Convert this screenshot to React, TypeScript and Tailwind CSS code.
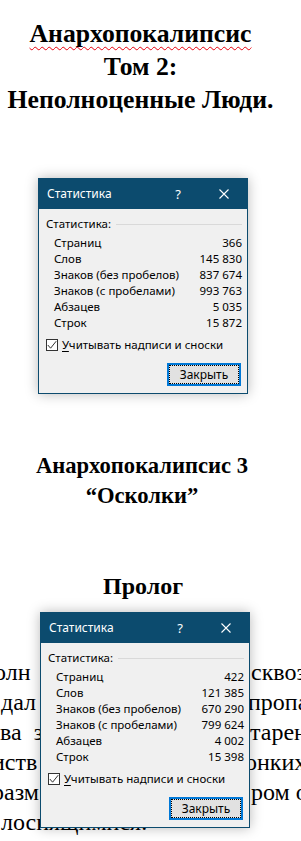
const serif = { fontFamily: '"Liberation Serif", "Times New Roman", serif' };
const ui = { fontFamily: '"Noto Sans", "Open Sans", sans-serif' };

type Row = [string, string];

const StatsDialog = ({ rows }: { rows: Row[] }) => (
  <div
    className="flex h-[216px] w-[210px] flex-col border border-[#0c4b6e] bg-[#f0f0f0] text-[11.5px] leading-[16px] text-black shadow-[0_0_12px_rgba(0,0,0,0.28)]"
    style={ui}
  >
    <div className="flex h-[30px] shrink-0 items-center bg-[#0c4b6e] text-[12px] text-white">
      <span className="flex-1 pl-[8px]">Статистика</span>
      <span className="w-[46px] text-center text-[13px]">?</span>
      <span className="flex w-[46px] justify-center">
        <svg width="10" height="10" viewBox="0 0 10 10">
          <path d="M0.5 0.5 L9.5 9.5 M9.5 0.5 L0.5 9.5" stroke="#fff" strokeWidth="1.1" />
        </svg>
      </span>
    </div>

    <div className="pl-[7px] pr-[5px] pt-[7px]">
      <div className="flex items-center gap-[5px]">
        <span>Статистика:</span>
        <span className="h-px flex-1 bg-[#d9d9d9]" />
      </div>

      <div className="mt-[3px] pl-[8px]">
        {rows.map(([label, value]) => (
          <div key={label} className="flex h-[16px] items-center justify-between">
            <span>{label}</span>
            <span>{value}</span>
          </div>
        ))}
      </div>

      <div className="mt-[6px] flex h-[16px] items-center gap-[4px]">
        <span className="flex h-[12px] w-[12px] items-center justify-center border border-[#333] bg-white">
          <svg width="10" height="10" viewBox="0 0 10 10">
            <path d="M0.8 5 L3.6 8.2 L9.2 1.2" fill="none" stroke="#333" strokeWidth="1" />
          </svg>
        </span>
        <span>
          <span className="underline underline-offset-[2px]">У</span>читывать надписи и сноски
        </span>
      </div>
    </div>

    <div className="mt-[10px] flex justify-end pr-[6px]">
      <button className="flex h-[23px] w-[74px] items-center justify-center border-2 border-[#0078d7] bg-[#e1e1e1] text-[12px] outline-1 outline-dotted outline-black outline-offset-[-3px]">
        Закрыть
      </button>
    </div>
  </div>
);

const firstStats: Row[] = [
  ['Страниц', '366'],
  ['Слов', '145 830'],
  ['Знаков (без пробелов)', '837 674'],
  ['Знаков (с пробелами)', '993 763'],
  ['Абзацев', '5 035'],
  ['Строк', '15 872'],
];

const secondStats: Row[] = [
  ['Страниц', '422'],
  ['Слов', '121 385'],
  ['Знаков (без пробелов)', '670 290'],
  ['Знаков (с пробелами)', '799 624'],
  ['Абзацев', '4 002'],
  ['Строк', '15 398'],
];

// prologue lines, mostly hidden behind the second dialog
const proseLines = [
  { left: 'олн', leftCls: 'indent-[-6px]', right: 'сквозь', rightCls: 'ml-[1px]' },
  { left: 'дал', leftCls: 'indent-[1px]', right: 'пропа', rightCls: 'ml-[-2px]' },
  { left: 'ва з', leftCls: 'indent-0 [word-spacing:6px]', right: 'тарени', rightCls: 'ml-0' },
  { left: 'иств', leftCls: 'indent-[-8px]', right: 'онких', rightCls: 'ml-[-5px]' },
  { left: 'разм', leftCls: 'indent-[-8px]', right: 'ром от', rightCls: 'ml-[1px]' },
  { left: 'лоснящимися.', leftCls: 'indent-[1px]', right: '', rightCls: '' },
];

export default function App() {
  return (
    <div className="h-[841px] w-[301px] overflow-hidden bg-white text-black" style={serif}>
      <div className="w-[281px] pt-[17px] text-center text-[25.7px] font-bold leading-[33px]">
        <div>
          <span className="underline decoration-red-600 decoration-wavy decoration-1 underline-offset-[4px] [text-decoration-skip-ink:none]">
            Анархопокалипсис
          </span>
        </div>
        <div>Том 2:</div>
        <div className="whitespace-nowrap">Неполноценные Люди.</div>
      </div>

      <div className="ml-[38px] mt-[62px]">
        <StatsDialog rows={firstStats} />
      </div>

      <div className="mt-[57px] w-[284px] text-center text-[22.6px] font-bold leading-[30px]">
        <div>Анархопокалипсис 3</div>
        <div>“Осколки”</div>
      </div>

      <div className="mt-[58px] w-[286px] text-center text-[24px] font-bold leading-[34px]">Пролог</div>

      <div className="relative mt-[9px]">
        <div className="pt-[45px] text-[24px] leading-[30px]">
          {proseLines.map((line) => (
            <div key={line.left} className="flex whitespace-nowrap">
              <span className={`block w-[250px] shrink-0 overflow-hidden ${line.leftCls}`}>{line.left}</span>
              <span className={line.rightCls}>{line.right}</span>
            </div>
          ))}
        </div>
        <div className="absolute left-[40px] top-0">
          <StatsDialog rows={secondStats} />
        </div>
      </div>
    </div>
  );
}
